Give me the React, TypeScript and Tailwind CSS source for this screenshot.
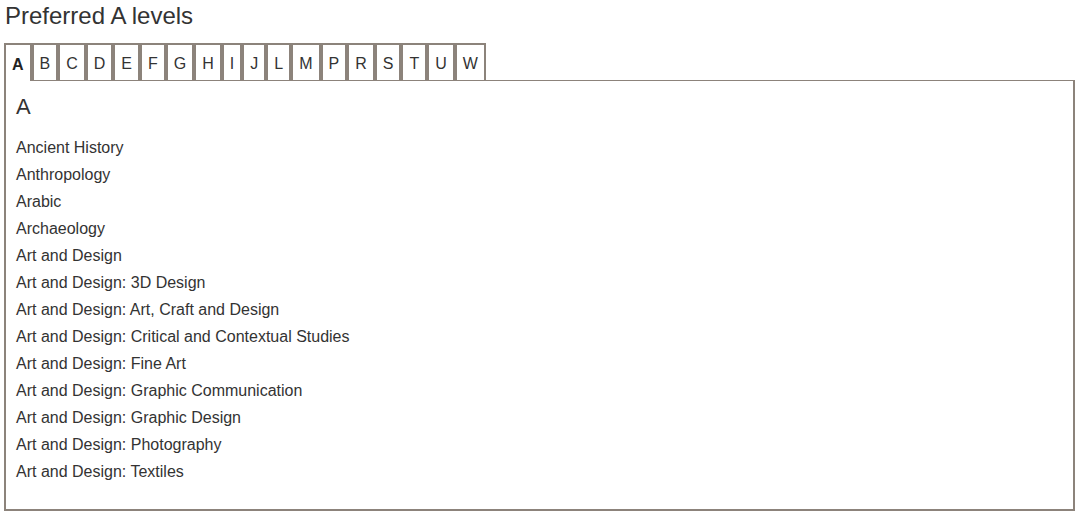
import React from "react";

const letters = ["A","B","C","D","E","F","G","H","I","J","L","M","P","R","S","T","U","W"];
const items = [
  "Ancient History",
  "Anthropology",
  "Arabic",
  "Archaeology",
  "Art and Design",
  "Art and Design: 3D Design",
  "Art and Design: Art, Craft and Design",
  "Art and Design: Critical and Contextual Studies",
  "Art and Design: Fine Art",
  "Art and Design: Graphic Communication",
  "Art and Design: Graphic Design",
  "Art and Design: Photography",
  "Art and Design: Textiles",
];

export default function App() {
  return (
    <div className="w-[1079px] h-[519px] bg-white px-[4px] text-[#333333] overflow-hidden" style={{ fontFamily: '"Liberation Sans", Arial, sans-serif' }}>
      <div className="mt-[2px] pl-[1px] text-[24px] leading-[28px]">Preferred A levels</div>
      <div className="mt-[13px] flex items-end">
        {letters.map((l, i) =>
          i === 0 ? (
            <div key={l} className="relative z-10 -mb-px h-[38px] flex items-center justify-center px-[6px] pt-[3px] border-t-2 border-x-2 border-b-0 border-[#8c837b] bg-white font-bold text-[16px] text-[#222222]">
              {l}
            </div>
          ) : (
            <div key={l} className="h-[37px] flex items-center justify-center px-[6px] pt-[3px] border-t-2 border-x-2 border-b-0 border-[#8c837b] bg-white text-[16px] text-[#333333]">
              {l}
            </div>
          )
        )}
      </div>
      <div className="border-t border-x-2 border-b-2 border-[#8c837b] pt-[13px] px-[10px] pb-[24px]">
        <h2 className="text-[22px] leading-[26px]">A</h2>
        <ul className="mt-[14px]">
          {items.map((t) => (
            <li key={t} className="text-[16px] leading-[27px]">{t}</li>
          ))}
        </ul>
      </div>
    </div>
  );
}
